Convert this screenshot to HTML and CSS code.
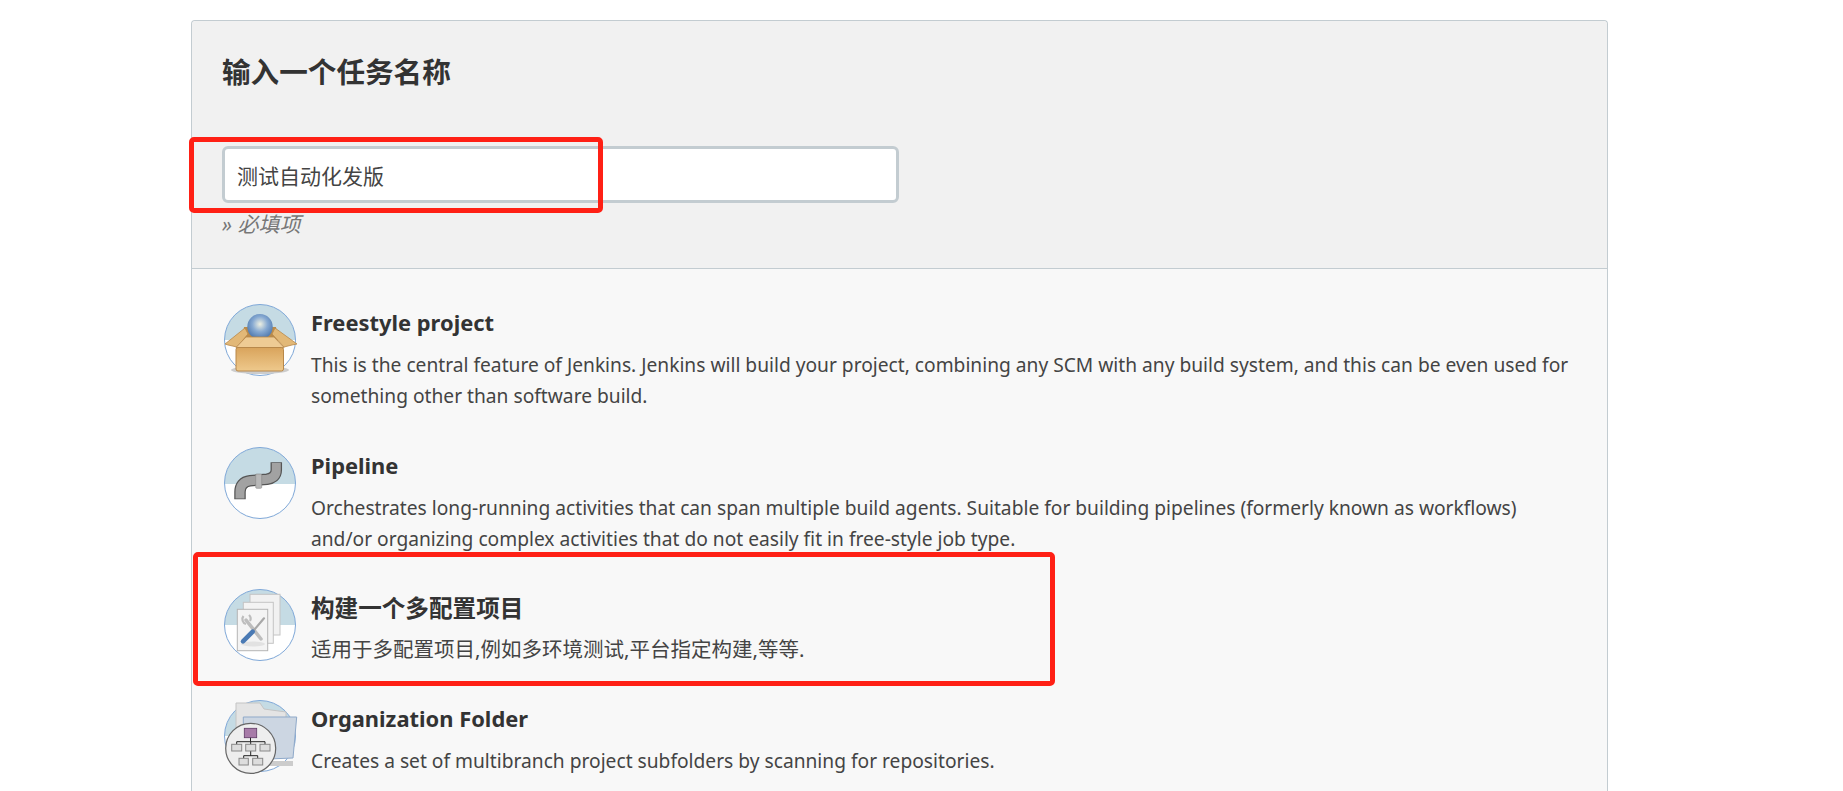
FILE: index.html
```html
<!DOCTYPE html>
<html lang="zh-CN">
<head>
    <meta charset="UTF-8">
    <title>输入一个任务名称</title>
    <link rel="stylesheet" href="styles.css">
</head>
<body>
    <div class="page">
        <div class="panel">

            <!-- Name field -->
            <div class="name-section">
                <h2 class="name-title">输入一个任务名称</h2>
                <input class="name-input" type="text" value="测试自动化发版">
                <p class="name-hint">» 必填项</p>
            </div>

            <!-- Job types -->
            <ul class="job-list">
                <li class="job">
                    <svg class="job-icon" viewBox="0 0 72 72">
                        <defs>
                            <clipPath id="clipA"><circle cx="36" cy="36" r="35.5"/></clipPath>
                            <radialGradient id="ball" cx="0.5" cy="0.4" r="0.6">
                                <stop offset="0" stop-color="#eef0e2"/>
                                <stop offset="0.5" stop-color="#86a9d2"/>
                                <stop offset="1" stop-color="#4c76ac"/>
                            </radialGradient>
                            <linearGradient id="boxFront" x1="0" y1="0" x2="0" y2="1">
                                <stop offset="0" stop-color="#d9a45c"/>
                                <stop offset="1" stop-color="#eec98c"/>
                            </linearGradient>
                        </defs>
                        <circle cx="36" cy="36" r="35.5" fill="#fff"/>
                        <rect x="0" y="0" width="72" height="36" fill="#c5dbe4" clip-path="url(#clipA)"/>
                        <circle cx="36" cy="36" r="35.5" fill="none" stroke="#7fa8d8"/>
                        <ellipse cx="36" cy="66" rx="29" ry="4" fill="#ccc"/>
                        <path d="M20 23 L52 23 L54 38 L18 38Z" fill="#b98a4a"/>
                        <circle cx="36" cy="22.7" r="12.7" fill="url(#ball)"/>
                        <path d="M1 40 L21 24 L24 30 L13 43 L4 41Z" fill="#e2b877" stroke="#b8884a" stroke-width="0.8"/>
                        <path d="M73 40 L51 24 L48 30 L60 43 L68 41Z" fill="#e2b877" stroke="#b8884a" stroke-width="0.8"/>
                        <path d="M22 33 L50 33 L60 43.5 L12 43.5Z" fill="#eecb94" stroke="#b8884a" stroke-width="0.8"/>
                        <rect x="12" y="43.5" width="47.5" height="23.5" rx="2" fill="url(#boxFront)" stroke="#b8884a"/>
                    </svg>
                    <div class="job-text">
                        <div class="job-title">Freestyle project</div>
                        <div class="job-desc">This is the central feature of Jenkins. Jenkins will build your project, combining any SCM with any build system, and this can be even used for something other than software build.</div>
                    </div>
                </li>
                <li class="job">
                    <svg class="job-icon" viewBox="0 0 72 72">
                        <defs>
                            <clipPath id="clipB"><circle cx="36" cy="36" r="35.5"/></clipPath>
                        </defs>
                        <circle cx="36" cy="36" r="35.5" fill="#fff"/>
                        <rect x="0" y="0" width="72" height="37" fill="#c5dbe4" clip-path="url(#clipB)"/>
                        <circle cx="36" cy="36" r="35.5" fill="none" stroke="#7fa8d8"/>
                        <path d="M52.3 15.3 L52.3 23 C52.3 29 48 31.5 43 32.2 L26 33.7 C19 34.5 16 39 16 45 L16 52.3" fill="none" stroke="#555" stroke-width="11.5"/>
                        <path d="M52.3 16 L52.3 23 C52.3 29 48 31.5 43 32.2 L26 33.7 C19 34.5 16 39 16 45 L16 51.6" fill="none" stroke="#a2a2a2" stroke-width="9"/>
                        <rect x="31.7" y="27" width="6" height="14.3" rx="1" fill="#b8b8b8" stroke="#888" stroke-width="0.6"/>
                    </svg>
                    <div class="job-text">
                        <div class="job-title">Pipeline</div>
                        <div class="job-desc">Orchestrates long-running activities that can span multiple build agents. Suitable for building pipelines (formerly known as workflows) and/or organizing complex activities that do not easily fit in free-style job type.</div>
                    </div>
                </li>
                <li class="job job-cjk">
                    <svg class="job-icon" viewBox="0 0 72 72">
                        <defs>
                            <clipPath id="clipC"><circle cx="36" cy="36" r="35.5"/></clipPath>
                        </defs>
                        <circle cx="36" cy="36" r="35.5" fill="#fff"/>
                        <rect x="0" y="0" width="72" height="36" fill="#c5dbe4" clip-path="url(#clipC)"/>
                        <circle cx="36" cy="36" r="35.5" fill="none" stroke="#7fa8d8"/>
                        <rect x="26" y="5.3" width="30" height="40.7" fill="#f1f1f1" stroke="#c4c4c4"/>
                        <rect x="19.3" y="13.3" width="30" height="41" fill="#f3f3f3" stroke="#c4c4c4"/>
                        <rect x="13.3" y="20.3" width="30.4" height="41.4" fill="#f4f4f4" stroke="#b4b4b4"/>
                        <ellipse cx="29" cy="55" rx="12" ry="2.5" fill="#e2e2e2"/>
                        <path d="M22 31 L37 50" stroke="#bdbdbd" stroke-width="3.5" stroke-linecap="round"/>
                        <path d="M19.5 27 a5 5 0 0 0 2.5 8" fill="none" stroke="#bdbdbd" stroke-width="2.2"/>
                        <path d="M25 26 a5 5 0 0 1 1 6" fill="none" stroke="#bdbdbd" stroke-width="2.2"/>
                        <path d="M28.7 42.7 L40 29.3" stroke="#a8a8a8" stroke-width="2.2" stroke-linecap="round"/>
                        <path d="M19 52.4 L28.7 42.7" stroke="#4a7ab4" stroke-width="4.6" stroke-linecap="round"/>
                    </svg>
                    <div class="job-text">
                        <div class="job-title">构建一个多配置项目</div>
                        <div class="job-desc">适用于多配置项目,例如多环境测试,平台指定构建,等等.</div>
                    </div>
                </li>
                <li class="job">
                    <svg class="job-icon" viewBox="0 0 72 72">
                        <defs>
                            <clipPath id="clipD"><circle cx="36" cy="36" r="35.5"/></clipPath>
                        </defs>
                        <circle cx="36" cy="36" r="35.5" fill="#fff"/>
                        <rect x="0" y="0" width="72" height="36" fill="#c5dbe4" clip-path="url(#clipD)"/>
                        <circle cx="36" cy="36" r="35.5" fill="none" stroke="#7fa8d8"/>
                        <rect x="45" y="61" width="24" height="5" fill="#ccc"/>
                        <path d="M12 3 L36 3 L40 9 L62 12 L62 50 L12 50Z" fill="#e4e4e4" stroke="#c4c4c4"/>
                        <path d="M19.3 17 L72.7 17 L69 58 L19.3 60Z" fill="#ccd6e2" stroke="#8fa9c9"/>
                        <circle cx="26.7" cy="48.3" r="25" fill="#eee" stroke="#666" stroke-width="1.2"/>
                        <path d="M26.5 37 V41.7 M12.7 44.5 V41.7 H41 V44.5 M26.7 41.7 V44.5 M26.7 51 V55.7 M19.7 58.5 V55.7 H33.7 V58.5" fill="none" stroke="#222" stroke-width="1"/>
                        <rect x="20.3" y="28.3" width="12.4" height="9.4" fill="#a77ba8" stroke="#5f3a66" stroke-width="0.8"/>
                        <rect x="7.7" y="44.3" width="10" height="6.7" fill="#ddd" stroke="#888"/>
                        <rect x="21.7" y="44.3" width="10" height="6.7" fill="#ddd" stroke="#888"/>
                        <rect x="36" y="44.3" width="10" height="6.7" fill="#ddd" stroke="#888"/>
                        <rect x="15" y="58.3" width="9.3" height="6.7" fill="#ddd" stroke="#888"/>
                        <rect x="28.7" y="58.3" width="10" height="6.7" fill="#ddd" stroke="#888"/>
                    </svg>
                    <div class="job-text">
                        <div class="job-title">Organization Folder</div>
                        <div class="job-desc">Creates a set of multibranch project subfolders by scanning for repositories.</div>
                    </div>
                </li>
            </ul>
        </div>
    </div>

    <!-- Red annotation boxes drawn on top of the screenshot -->
    <div class="mark mark-input"></div>
    <div class="mark mark-job"></div>
</body>
</html>
```

FILE: styles.css
```css
/* General Styles */
html, body {
    height: 100%;
    margin: 0;
    overflow: hidden;
}
body {
    position: relative;
    background-color: #fff;
    color: #333;
    font-family: "Noto Sans", "Noto Sans CJK SC", sans-serif;
}

.page {
    padding: 20px 235px 0 191px;
}

/* Panel */
.panel {
    height: 771px;
    box-sizing: border-box;
    background-color: #f8f8f8;
    border: 1px solid #c3ccd1;
    border-bottom: none;
    border-radius: 4px 4px 0 0;
    overflow: hidden;
}

/* Name field */
.name-section {
    height: 248px;
    box-sizing: border-box;
    padding: 32px 30px 0;
    background-color: #f1f1f1;
    border-bottom: 1px solid #c3ccd1;
    border-radius: 4px 4px 0 0;
}
.name-title {
    margin: 0;
    font-size: 28.6px;
    line-height: 38px;
    font-weight: 700;
}
.name-input {
    display: block;
    width: 677px;
    height: 57px;
    box-sizing: border-box;
    margin-top: 55px;
    padding: 0 12px;
    background: #fff;
    border: 3px solid #c3ccd1;
    border-radius: 6px;
    color: #444;
    font-family: inherit;
    font-size: 21px;
}
.name-hint {
    margin: 7px 0 0;
    font-size: 21px;
    line-height: 28px;
    font-style: italic;
    color: #777;
}

/* Job types */
.job-list {
    list-style: none;
    margin: 0;
    padding: 35px 32px 0;
}
.job {
    display: flex;
    gap: 15px;
    margin-bottom: 35px;
}
.job:first-child {
    margin-bottom: 36px;
}
.job-icon {
    flex: none;
    width: 72px;
    height: 72px;
    overflow: visible;
}
.job-title {
    font-size: 21.9px;
    line-height: 38px;
    font-weight: 700;
}
.job-desc {
    margin-top: 7px;
    font-size: 19.2px;
    line-height: 31px;
    color: #444;
}
.job-cjk .job-title {
    font-size: 23.6px;
}
.job-cjk .job-desc {
    font-size: 20.5px;
}

/* Annotation */
.mark {
    position: absolute;
    box-sizing: border-box;
    border: 5px solid #ff2015;
    border-radius: 5px;
}
.mark-input {
    left: 189px;
    top: 137px;
    width: 414px;
    height: 76px;
}
.mark-job {
    left: 193px;
    top: 552px;
    width: 862px;
    height: 134px;
}
```
